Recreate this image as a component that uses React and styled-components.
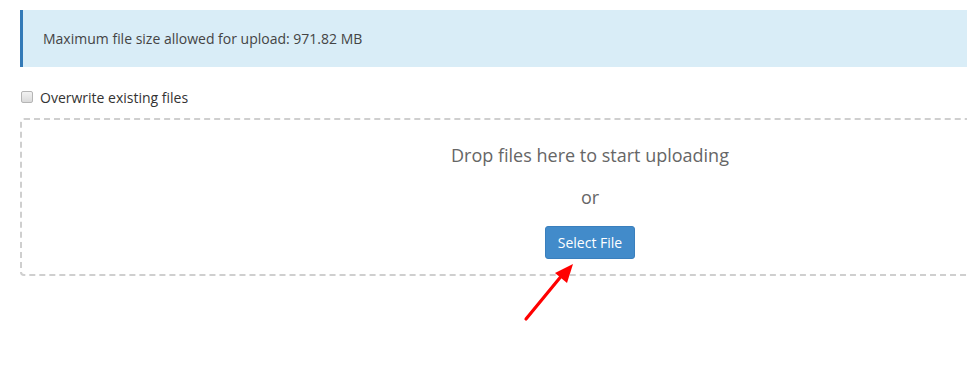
import React from "react";
import styled, { createGlobalStyle } from "styled-components";

const Global = createGlobalStyle`
  html, body { margin: 0; padding: 0; background: #fff; overflow: hidden; }
  body { font-family: "Open Sans", "Noto Sans", sans-serif; color: #333; }
`;

const Page = styled.div`
  position: relative;
  width: 967px;
  height: 384px;
  overflow: hidden;
  padding: 10px 0 0 20px;
  box-sizing: border-box;
`;

const Alert = styled.div`
  width: 1140px;
  box-sizing: border-box;
  background: #d9edf7;
  border-left: 3px solid #337ab7;
  padding: 19px 20px 18px 20px;
  font-size: 14px;
  line-height: 20px;
  color: #444;
`;

const CheckRow = styled.label`
  display: flex;
  align-items: center;
  gap: 7px;
  margin-top: 20px;
  height: 20px;
  font-size: 14px;
  color: #333;
`;

const Check = styled.input`
  appearance: none;
  -webkit-appearance: none;
  margin: 0 0 0 1px;
  width: 12px;
  height: 12px;
  box-sizing: border-box;
  border: 1px solid #b5b5b5;
  border-radius: 2px;
  background: linear-gradient(#f2f2f2, #dadada);
`;

const DropZone = styled.div`
  margin-top: 11px;
  width: 1140px;
  box-sizing: border-box;
  border: 2px dashed #cfcfcf;
  border-radius: 4px;
  padding: 22px 0 15px;
  display: flex;
  flex-direction: column;
  align-items: center;
  gap: 16px;
`;

const DropText = styled.div`
  font-size: 18px;
  line-height: 26px;
  color: #666;
`;

const Button = styled.button`
  font-family: "Open Sans", "Noto Sans", sans-serif;
  background: #428bca;
  color: #fff;
  border: 1px solid #3a7fbd;
  border-radius: 3px;
  font-size: 14px;
  width: 90px;
  height: 33px;
  padding: 0;
`;

const Arrow = styled.svg`
  position: absolute;
  left: 0;
  top: 0;
  pointer-events: none;
`;

export default function App() {
  return (
    <>
      <Global />
      <Page>
        <Alert>Maximum file size allowed for upload: 971.82 MB</Alert>
        <CheckRow>
          <Check type="checkbox" />
          Overwrite existing files
        </CheckRow>
        <DropZone>
          <DropText>Drop files here to start uploading</DropText>
          <DropText>or</DropText>
          <Button>Select File</Button>
        </DropZone>
        <Arrow width="967" height="384" viewBox="0 0 967 384">
          <line x1="526" y1="319" x2="563" y2="274" stroke="#f00" strokeWidth="3.2" strokeLinecap="round" />
          <polygon points="573,264 567,283 555,273" fill="#f00" />
        </Arrow>
      </Page>
    </>
  );
}
